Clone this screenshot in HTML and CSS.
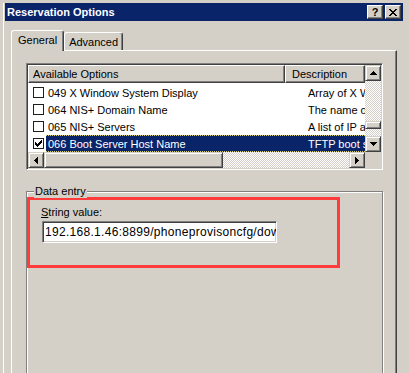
FILE: index.html
```html
<!DOCTYPE html>
<html lang="en">
<head>
  <meta charset="UTF-8">
  <title>Reservation Options</title>
  <link rel="stylesheet" href="styles.css">
</head>
<body>

<div class="window">
  <div class="frame">

    <!-- Caption -->
    <div class="titlebar">
      <span class="title">Reservation Options</span>
      <div class="caption-buttons">
        <div class="cap-btn">?</div>
        <div class="cap-btn">
          <svg width="8" height="7" viewBox="0 0 8 7" shape-rendering="crispEdges"><path fill="#000" d="M0 0h2v1H0z M6 0h2v1H6z M1 1h2v1H1z M5 1h2v1H5z M2 2h4v1H2z M3 3h2v1H3z M2 4h4v1H2z M1 5h2v1H1z M5 5h2v1H5z M0 6h2v1H0z M6 6h2v1H6z"/></svg>
        </div>
      </div>
    </div>

    <div class="client">
      <div class="tabs">
        <div class="tab active">General</div>
        <div class="tab">Advanced</div>
      </div>

      <div class="panel">

        <!-- Options list -->
        <div class="listview">
          <div class="lv-main">
            <div class="lv-header">
              <div class="lv-col col-name">Available Options</div>
              <div class="lv-col col-desc">Description</div>
            </div>
            <div class="lv-rows">
              <div class="lv-row">
                <div class="chk-cell"><span class="chk"></span></div>
                <div class="row-body">
                  <div class="cell-name">049 X Window System Display</div>
                  <div class="cell-desc">Array of X Window font servers</div>
                </div>
              </div>
              <div class="lv-row">
                <div class="chk-cell"><span class="chk"></span></div>
                <div class="row-body">
                  <div class="cell-name">064 NIS+ Domain Name</div>
                  <div class="cell-desc">The name of the client's NIS+ domain</div>
                </div>
              </div>
              <div class="lv-row">
                <div class="chk-cell"><span class="chk"></span></div>
                <div class="row-body">
                  <div class="cell-name">065 NIS+ Servers</div>
                  <div class="cell-desc">A list of IP addresses of NIS+ servers</div>
                </div>
              </div>
              <div class="lv-row selected">
                <div class="chk-cell">
                  <span class="chk">
                    <svg width="7" height="7" viewBox="0 0 7 7" shape-rendering="crispEdges"><path fill="#000" d="M6 0h1v1H6z M5 1h2v1H5z M0 2h1v1H0z M4 2h3v1H4z M0 3h2v1H0z M3 3h3v1H3z M0 4h5v1H0z M1 5h3v1H1z M2 6h1v1H2z"/></svg>
                  </span>
                </div>
                <div class="row-body">
                  <div class="cell-name">066 Boot Server Host Name</div>
                  <div class="cell-desc">TFTP boot server host name</div>
                </div>
              </div>
            </div>
          </div>

          <div class="vscroll">
            <div class="sb-btn">
              <svg width="7" height="4" viewBox="0 0 7 4" shape-rendering="crispEdges"><path fill="#000" d="M3 0h1v1H3z M2 1h3v1H2z M1 2h5v1H1z M0 3h7v1H0z"/></svg>
            </div>
            <div class="sb-track vertical"><div class="sb-thumb v-thumb"></div></div>
            <div class="sb-btn">
              <svg width="7" height="4" viewBox="0 0 7 4" shape-rendering="crispEdges"><path fill="#000" d="M0 0h7v1H0z M1 1h5v1H1z M2 2h3v1H2z M3 3h1v1H3z"/></svg>
            </div>
          </div>

          <div class="hscroll">
            <div class="sb-btn">
              <svg width="4" height="7" viewBox="0 0 4 7" shape-rendering="crispEdges"><path fill="#000" d="M3 0h1v7H3z M2 1h1v5H2z M1 2h1v3H1z M0 3h1v1H0z"/></svg>
            </div>
            <div class="sb-thumb h-thumb"></div>
            <div class="sb-track horizontal"></div>
            <div class="sb-btn">
              <svg width="4" height="7" viewBox="0 0 4 7" shape-rendering="crispEdges"><path fill="#000" d="M0 0h1v7H0z M1 1h1v5H1z M2 2h1v3H2z M3 3h1v1H3z"/></svg>
            </div>
          </div>

          <div class="corner"></div>
        </div>

        <!-- Data entry group -->
        <div class="group">
          <span class="group-label">Data entry</span>
          <div class="highlight">
            <div class="field-label"><span class="u">S</span>tring value:</div>
            <div class="textbox">192.168.1.46:8899/phoneprovisoncfg/download</div>
          </div>
        </div>

      </div>
    </div>
  </div>
</div>

</body>
</html>
```

FILE: styles.css
```css
body {
  margin: 0;
  background-color: #d4d0c8;
  font-family: "Liberation Sans", Arial, sans-serif;
  font-size: 11px;
  color: #000;
  overflow: hidden;
}
.window {
  width: 409px;
  height: 373px;
  padding: 3px 0 0 3px;
  box-sizing: border-box;
  overflow: hidden;
}
.frame {
  border-left: 1px solid #fff;
  padding-left: 1px;
  width: 398px;
  height: 400px;
}
/* Caption bar */
.titlebar {
  height: 18px;
  background-color: #0a246a;
  display: flex;
  align-items: center;
  justify-content: space-between;
  padding: 0 2px 0 2px;
}
.title {
  color: #fff;
  font-weight: bold;
  font-size: 11px;
}
.caption-buttons {
  display: flex;
  gap: 2px;
}
.cap-btn {
  width: 16px;
  height: 14px;
  box-sizing: border-box;
  background-color: #d4d0c8;
  border: 1px solid;
  border-color: #fff #404040 #404040 #fff;
  box-shadow: inset -1px -1px #808080;
  display: flex;
  align-items: center;
  justify-content: center;
  font-weight: bold;
  font-size: 11px;
  line-height: 1;
}
/* Tabs */
.client {
  padding: 9px 6px 0 6px;
}
.tabs {
  display: flex;
  align-items: flex-end;
  height: 20px;
}
.tab {
  height: 18px;
  box-sizing: border-box;
  border: 1px solid #fff;
  border-bottom: none;
  border-right-color: #404040;
  box-shadow: inset -1px 0 #808080;
  border-radius: 3px 3px 0 0;
  padding: 1px 4px 0 4px;
  display: flex;
  align-items: center;
  background-color: #d4d0c8;
}
.tab.active {
  height: 21px;
  margin-bottom: -1px;
  padding: 0 6px 2px 6px;
  position: relative;
  z-index: 1;
}
.panel {
  border: 1px solid #fff;
  border-right-color: #404040;
  box-shadow: inset -1px 0 #808080;
  padding: 12px 13px 0 14px;
  height: 340px;
}
/* List view */
.listview {
  width: 357px;
  box-sizing: border-box;
  border: 1px solid;
  border-color: #808080 #fff #fff #808080;
  box-shadow: inset 1px 1px #404040, inset -1px -1px #d4d0c8;
  padding: 1px;
  display: grid;
  grid-template-columns: 337px 16px;
  grid-template-rows: 87px 16px;
}
.lv-main {
  background-color: #fff;
  overflow: hidden;
}
.lv-header {
  display: flex;
  height: 18px;
}
.lv-col {
  box-sizing: border-box;
  height: 18px;
  background-color: #d4d0c8;
  border: 1px solid;
  border-color: #fff #404040 #404040 #fff;
  box-shadow: inset -1px -1px #808080;
  display: flex;
  align-items: center;
  white-space: nowrap;
  overflow: hidden;
}
.col-name {
  width: 273px;
  padding-left: 4px;
}
.col-desc {
  width: 80px;
  flex: none;
  padding-left: 6px;
}
.lv-rows {
  padding-top: 1px;
}
.lv-row {
  display: flex;
  height: 17px;
}
.chk-cell {
  width: 18px;
  flex: none;
  display: flex;
  align-items: center;
  padding-left: 5px;
  box-sizing: border-box;
}
.chk {
  width: 11px;
  height: 11px;
  box-sizing: border-box;
  border: 1px solid #1e1e1e;
  background-color: #fff;
  display: flex;
  align-items: center;
  justify-content: center;
}
.row-body {
  display: flex;
  flex: 1;
  align-items: center;
  white-space: nowrap;
  overflow: hidden;
}
.cell-name {
  width: 255px;
  flex: none;
  padding-left: 2px;
  box-sizing: border-box;
}
.cell-desc {
  padding-left: 7px;
}
.lv-row.selected .row-body {
  background-color: #0a246a;
  color: #fff;
  border-top: 1px dotted #d8d070;
  border-bottom: 1px dotted #d8d070;
  box-sizing: border-box;
}
/* Scroll bars */
.vscroll {
  display: flex;
  flex-direction: column;
}
.hscroll {
  display: flex;
}
.sb-btn {
  width: 16px;
  height: 16px;
  flex: none;
  box-sizing: border-box;
  background-color: #d4d0c8;
  border: 1px solid;
  border-color: #d4d0c8 #404040 #404040 #d4d0c8;
  box-shadow: inset 1px 1px #fff, inset -1px -1px #808080;
  display: flex;
  align-items: center;
  justify-content: center;
}
.sb-track {
  flex: 1;
  background: repeating-conic-gradient(#fff 0 25%, #d4d0c8 0 50%) 0 0 / 2px 2px;
}
.sb-track.vertical {
  display: flex;
  flex-direction: column;
}
.sb-thumb {
  box-sizing: border-box;
  background-color: #d4d0c8;
  border: 1px solid;
  border-color: #d4d0c8 #404040 #404040 #d4d0c8;
  box-shadow: inset 1px 1px #fff, inset -1px -1px #808080;
}
.v-thumb {
  height: 8px;
  margin-top: 40px;
}
.h-thumb {
  width: 179px;
  flex: none;
}
.corner {
  background-color: #d4d0c8;
}
/* Group box */
.group {
  position: relative;
  width: 355px;
  height: 220px;
  margin-top: 21px;
  border: 1px solid #808080;
  box-shadow: inset 1px 1px #fff, 1px 1px #fff;
}
.group-label {
  position: absolute;
  top: -7px;
  left: 7px;
  padding: 0 1px;
  line-height: 13px;
  background-color: #d4d0c8;
}
.highlight {
  width: 313px;
  height: 71px;
  margin-top: 5px;
  box-sizing: border-box;
  border: 3px solid #ff3b3b;
  padding: 6px 0 0 11px;
}
.field-label {
  line-height: 13px;
}
.u {
  text-decoration: underline;
}
.textbox {
  width: 235px;
  height: 22px;
  margin: 2px 0 0 1px;
  box-sizing: border-box;
  background-color: #fff;
  border: 1px solid;
  border-color: #808080 #fff #fff #808080;
  box-shadow: inset 1px 1px #404040, inset -1px -1px #d4d0c8;
  padding: 0 2px;
  font-size: 12px;
  letter-spacing: 0.3px;
  line-height: 20px;
  white-space: nowrap;
  overflow: hidden;
}
```
